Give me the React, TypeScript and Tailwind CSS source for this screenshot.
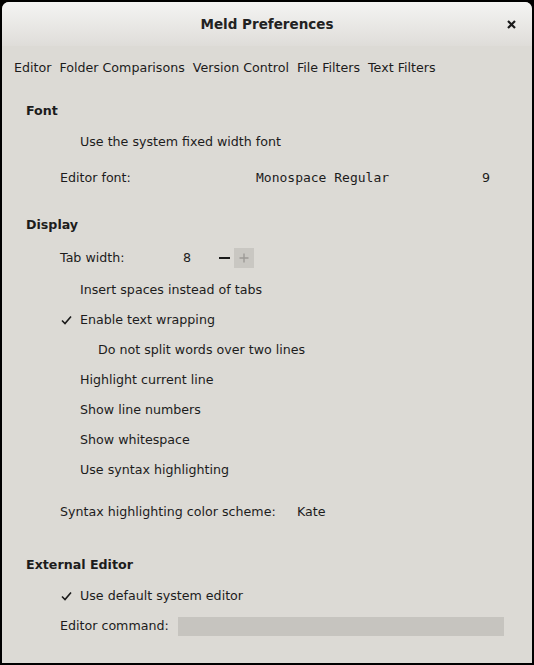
import React from "react";

const sans = { fontFamily: '"DejaVu Sans", sans-serif' };
const mono = { fontFamily: '"DejaVu Sans Mono", monospace' };

function Check() {
  return (
    <svg width="11" height="10" viewBox="0 0 11 10" className="shrink-0">
      <path d="M1 5.5 L4 8.5 L10 1.5" fill="none" stroke="#1a1a1a" strokeWidth="1.6" />
    </svg>
  );
}

function Option({ label, checked, indent = "pl-[78px]" }: { label: string; checked?: boolean; indent?: string }) {
  return (
    <div className={`h-[30px] flex items-center ${indent} relative`}>
      {checked && (
        <span className="absolute left-[59px] top-[10px]">
          <Check />
        </span>
      )}
      <span>{label}</span>
    </div>
  );
}

function Heading({ children }: { children: React.ReactNode }) {
  return <div className="h-[20px] flex items-center pl-[24px] font-bold">{children}</div>;
}

export default function App() {
  const tabs = ["Editor", "Folder Comparisons", "Version Control", "File Filters", "Text Filters"];
  return (
    <div className="w-[534px] h-[665px] bg-black p-[2px]" style={sans}>
      <div className="w-full h-full rounded-t-[7px] bg-[#dcdad5] text-[12.65px] text-[#1c1c1c] flex flex-col overflow-hidden">
        {/* title bar */}
        <div className="h-[44px] shrink-0 bg-gradient-to-b from-[#f4f4f3] to-[#dfddd9] flex items-center justify-center relative">
          <span className="font-bold text-[13.5px] text-[#222]">Meld Preferences</span>
          <svg className="absolute right-[16px] top-[18px]" width="9" height="9" viewBox="0 0 9 9">
            <path d="M1 1 L8 8 M8 1 L1 8" stroke="#1a1a1a" strokeWidth="2.2" />
          </svg>
        </div>
        {/* tabs */}
        <div className="h-[42px] mt-[1px] shrink-0 flex items-center gap-[8px] pl-[12px]">
          {tabs.map((t) => (
            <span key={t}>{t}</span>
          ))}
        </div>

        <div className="pt-[12px]">
          {/* Font */}
          <Heading>Font</Heading>
          <div className="mt-[6px]">
            <Option label="Use the system fixed width font" />
          </div>
          <div className="h-[30px] mt-[6px] flex items-center pl-[58px]">
            <span className="w-[196px]">Editor font:</span>
            <span className="w-[226px] text-[13px]" style={mono}>
              Monospace Regular
            </span>
            <span>9</span>
          </div>

          {/* Display */}
          <div className="mt-[22px]">
            <Heading>Display</Heading>
          </div>
          <div className="h-[30px] mt-[8px] flex items-center pl-[58px]">
            <span className="w-[123px]">Tab width:</span>
            <span className="w-[36px]">8</span>
            <span className="w-[11px] h-[2px] bg-[#1a1a1a] mr-[4px]" />
            <span className="w-[20px] h-[20px] bg-[#c9c7c2] flex items-center justify-center">
              <svg width="10" height="10" viewBox="0 0 10 10">
                <path d="M5 0.5 V9.5 M0.5 5 H9.5" stroke="#9d9b97" strokeWidth="1.4" />
              </svg>
            </span>
          </div>
          <div className="mt-[2px]">
            <Option label="Insert spaces instead of tabs" />
            <Option label="Enable text wrapping" checked />
            <Option label="Do not split words over two lines" indent="pl-[96px]" />
            <Option label="Highlight current line" />
            <Option label="Show line numbers" />
            <Option label="Show whitespace" />
            <Option label="Use syntax highlighting" />
          </div>
          <div className="h-[30px] mt-[12px] flex items-center pl-[58px]">
            <span className="w-[237px]">Syntax highlighting color scheme:</span>
            <span>Kate</span>
          </div>

          {/* External Editor */}
          <div className="mt-[28px]">
            <Heading>External Editor</Heading>
          </div>
          <div className="mt-[6px]">
            <Option label="Use default system editor" checked />
          </div>
          <div className="h-[30px] flex items-center pl-[58px]">
            <span className="w-[118px]">Editor command:</span>
            <span className="w-[326px] h-[19px] bg-[#c6c4bf]" />
          </div>
        </div>
      </div>
    </div>
  );
}
